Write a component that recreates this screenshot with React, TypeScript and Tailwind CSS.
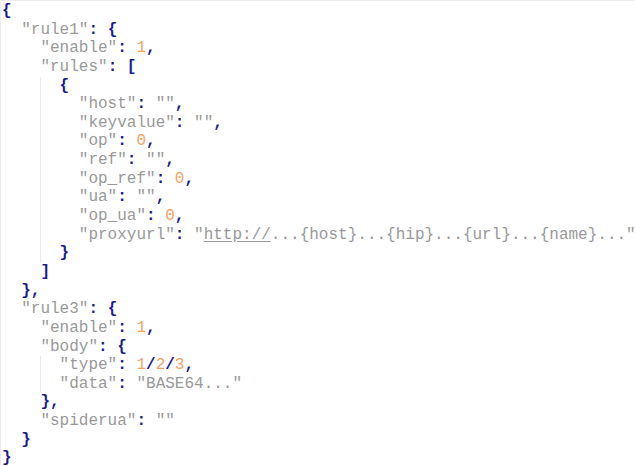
import React from 'react';

type Seg = { t: string; c: 'k' | 'p' | 'n' | 's' | 'u' };
type Line = { indent: number; segs: Seg[]; guide?: boolean };

const k = (t: string): Seg => ({ t, c: 'k' });
const p = (t: string): Seg => ({ t, c: 'p' });
const n = (t: string): Seg => ({ t, c: 'n' });
const s = (t: string): Seg => ({ t, c: 's' });
const u = (t: string): Seg => ({ t, c: 'u' });

const lines: Line[] = [
	{ indent: 0, segs: [p('{')] },
	{ indent: 1, segs: [k('"rule1"'), p(': {')] },
	{ indent: 2, segs: [k('"enable"'), p(': '), n('1'), p(',')] },
	{ indent: 2, segs: [k('"rules"'), p(': [')] },
	{ indent: 3, segs: [p('{')], guide: true },
	{ indent: 4, segs: [k('"host"'), p(': '), s('""'), p(',')], guide: true },
	{ indent: 4, segs: [k('"keyvalue"'), p(': '), s('""'), p(',')], guide: true },
	{ indent: 4, segs: [k('"op"'), p(': '), n('0'), p(',')], guide: true },
	{ indent: 4, segs: [k('"ref"'), p(': '), s('""'), p(',')], guide: true },
	{ indent: 4, segs: [k('"op_ref"'), p(': '), n('0'), p(',')], guide: true },
	{ indent: 4, segs: [k('"ua"'), p(': '), s('""'), p(',')], guide: true },
	{ indent: 4, segs: [k('"op_ua"'), p(': '), n('0'), p(',')], guide: true },
	{
		indent: 4,
		segs: [k('"proxyurl"'), p(': '), s('"'), u('http://'), s('...{host}...{hip}...{url}...{name}..."')],
		guide: true,
	},
	{ indent: 3, segs: [p('}')], guide: true },
	{ indent: 2, segs: [p(']')] },
	{ indent: 1, segs: [p('},')] },
	{ indent: 1, segs: [k('"rule3"'), p(': {')] },
	{ indent: 2, segs: [k('"enable"'), p(': '), n('1'), p(',')] },
	{ indent: 2, segs: [k('"body"'), p(': {')] },
	{ indent: 3, segs: [k('"type"'), p(': '), n('1'), p('/'), n('2'), p('/'), n('3'), p(',')], guide: true },
	{ indent: 3, segs: [k('"data"'), p(': '), s('"BASE64..."')], guide: true },
	{ indent: 2, segs: [p('},')] },
	{ indent: 2, segs: [k('"spiderua"'), p(': '), s('""')] },
	{ indent: 1, segs: [p('}')] },
	{ indent: 0, segs: [p('}')] },
];

const color: Record<Seg['c'], string> = {
	k: 'text-[#999999]',
	s: 'text-[#999999]',
	u: 'text-[#999999] underline underline-offset-2',
	p: 'text-[#1b1b8a] font-bold',
	n: 'text-[#f7a161]',
};

export default function App() {
	return (
		<div className="w-[635px] h-[466px] bg-white border-t border-l border-[#ececec] overflow-hidden">
			<div className="pt-px pl-px font-['Liberation_Mono',monospace] text-[16px] leading-[18.65px] whitespace-pre">
				{lines.map((line, i) => (
					<div key={i} className="relative h-[18.65px]">
						{line.guide && (
							<span className="absolute left-[38.4px] top-0 bottom-0 border-l border-[#ebebeb]" />
						)}
						<span>{'  '.repeat(line.indent)}</span>
						{line.segs.map((seg, j) => (
							<span key={j} className={color[seg.c]}>
								{seg.t}
							</span>
						))}
					</div>
				))}
			</div>
		</div>
	);
}
